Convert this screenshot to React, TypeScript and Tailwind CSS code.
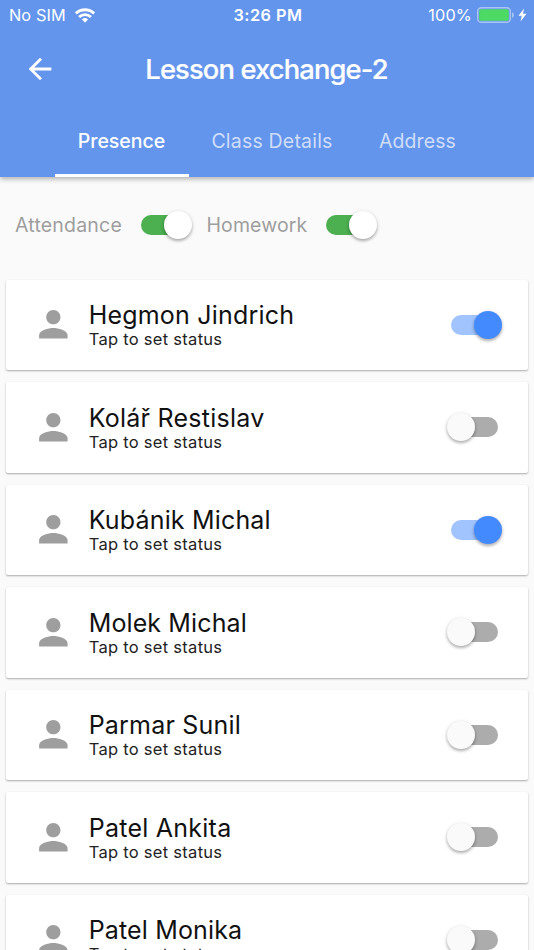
import React, { useState } from 'react';
import clsx from 'clsx';

const students = [
  { name: 'Hegmon Jindrich', present: true, spacing: 'tracking-[0.2px]' },
  { name: 'Kolář Restislav', present: false, spacing: 'tracking-[0.25px]' },
  { name: 'Kubánik Michal', present: true, spacing: 'tracking-[0.17px]' },
  { name: 'Molek Michal', present: false, spacing: 'tracking-[0.12px]' },
  { name: 'Parmar Sunil', present: false, spacing: 'tracking-[0.2px]' },
  { name: 'Patel Ankita', present: false, spacing: 'tracking-[0.25px]' },
  { name: 'Patel Monika', present: false, spacing: 'tracking-[0.15px]' },
];

const tabs = [
  { name: 'Presence', className: 'w-[134px] tracking-[0px]' },
  { name: 'Class Details', className: 'w-[167px] tracking-[0.2px]' },
  { name: 'Address', className: 'w-[124px] tracking-[0.1px]' },
];

type SwitchProps = {
  checked: boolean;
  green?: boolean;
  label: string;
  onChange: () => void;
};

const Switch = ({ checked, green, label, onChange }: SwitchProps) => (
  <button
    role="switch"
    aria-checked={checked}
    aria-label={label}
    onClick={onChange}
    className={clsx(
      'relative h-5 w-[47px] shrink-0 rounded-full',
      !checked && 'bg-[#acacac]',
      checked && (green ? 'bg-[#4caf50]' : 'bg-[#a1c4ff]')
    )}
  >
    <span
      className={clsx(
        'absolute -top-[4.2px] size-[28.4px] rounded-full shadow-[0_2px_3px_rgba(0,0,0,0.24),0_1px_4px_rgba(0,0,0,0.14)]',
        checked ? 'left-[23px]' : '-left-[4px]',
        !checked && 'bg-[#fafafa]',
        checked && (green ? 'bg-white' : 'bg-[#448aff]')
      )}
    />
  </button>
);

const StatusBar = () => (
  <div className="flex h-[30px] items-center justify-between pl-[9px] pr-[7px] text-[16.3px] leading-[30px]">
    <div className="flex flex-1 items-center gap-[9px]">
      <span className="tracking-[0.1px]">No SIM</span>
      <svg width="20" height="15" viewBox="0 0 20 15" fill="none" stroke="currentColor" strokeWidth="2.8">
        <path d="M0.9 5.4a13.2 13.2 0 0 1 18.2 0" />
        <path d="M4.1 8.9a8.6 8.6 0 0 1 11.8 0" />
        <path d="M10 14.7l-3-3.2a4.4 4.4 0 0 1 6 0z" fill="currentColor" stroke="none" />
      </svg>
    </div>
    <span className="font-semibold tracking-[0.45px]">3:26 PM</span>
    <div className="flex flex-1 items-center justify-end">
      <span className="mr-[5px] tracking-[0.15px]">100%</span>
      <svg width="38" height="16" viewBox="0 0 38 16">
        <rect x="0.7" y="0.7" width="32.6" height="14.6" rx="3.6" fill="none" stroke="#fff" strokeOpacity="0.45" strokeWidth="1.4" />
        <rect x="2.2" y="2.2" width="29.6" height="11.6" rx="1.8" fill="#4cd964" />
        <path d="M35 5.2c2.4 0.8 2.4 4.8 0 5.6z" fill="#fff" fillOpacity="0.45" />
      </svg>
      <svg className="ml-[3px]" width="9" height="14" viewBox="0 0 9 14" fill="currentColor">
        <path d="M6 0.5L0.5 7.8h3.2L2.5 13.5 8.5 5.8H5z" />
      </svg>
    </div>
  </div>
);

const Header = () => (
  <header className="relative z-10 h-[177px] bg-[#6495ed] text-white shadow-[0_2px_5px_rgba(0,0,0,0.3)]">
    <StatusBar />
    <div className="grid h-[77px] grid-cols-[80px_1fr_80px] items-center">
      <button aria-label="Back" className="ml-[23px] w-[34px]">
        <svg className="size-[34px]" viewBox="0 0 24 24" fill="currentColor">
          <path d="M20 11H7.83l5.59-5.59L12 4l-8 8 8 8 1.41-1.41L7.83 13H20v-2z" />
        </svg>
      </button>
      <h1 className="pt-[3px] pr-[1px] text-center text-[27.3px] font-medium tracking-[-0.85px] [-webkit-text-stroke:0.2px_white]">
        Lesson exchange-2
      </h1>
    </div>
    <nav className="flex h-[70px] justify-center">
      {tabs.map((tab, i) => (
        <button
          key={tab.name}
          className={clsx(
            'border-b-[3px] pt-[2px] text-[19.5px] whitespace-nowrap',
            tab.className,
            i === 0 ? 'border-white font-medium' : 'border-transparent text-white/70'
          )}
        >
          {tab.name}
        </button>
      ))}
    </nav>
  </header>
);

export default function App() {
  const [attendance, setAttendance] = useState(true);
  const [homework, setHomework] = useState(true);
  const [present, setPresent] = useState(students.map((s) => s.present));

  const toggle = (index: number) => {
    setPresent(present.map((value, i) => (i === index ? !value : value)));
  };

  return (
    <div className="h-[950px] w-[534px] overflow-hidden bg-[#fafafa] font-['Inter',sans-serif]">
      <Header />

      {/* Column switches */}
      <div className="flex h-[102.5px] items-center pb-[6.5px] pl-[15px] text-[19.5px] text-[#9e9e9e]">
        <span className="w-[126px] pt-[1px] tracking-[0.2px]">Attendance</span>
        <Switch green label="Attendance" checked={attendance} onChange={() => setAttendance(!attendance)} />
        <span className="ml-[18.5px] w-[119.5px] pt-[1px] tracking-[0.1px]">Homework</span>
        <Switch green label="Homework" checked={homework} onChange={() => setHomework(!homework)} />
      </div>

      <ul className="flex flex-col gap-[12px] px-[6px]">
        {students.map((student, i) => (
          <li
            key={student.name}
            className="flex h-[90.5px] shrink-0 items-center rounded-[2px] bg-white pl-[25.5px] pr-[30px] shadow-[0_1px_2px_rgba(0,0,0,0.32)]"
          >
            <svg className="size-[42.7px] shrink-0 text-[#9e9e9e]" viewBox="0 0 24 24" fill="currentColor">
              <path d="M12 12c2.21 0 4-1.79 4-4s-1.79-4-4-4-4 1.79-4 4 1.79 4 4 4zm0 2c-2.67 0-8 1.34-8 4v2h16v-2c0-2.66-5.33-4-8-4z" />
            </svg>
            <div className="ml-[14.5px] flex-1 pt-[1px] whitespace-nowrap">
              <p className={clsx('text-[25px] leading-[29px] text-[#111]', student.spacing)}>{student.name}</p>
              <p className="text-[16.5px] leading-[19.3px] tracking-[0.28px] text-[#222]">Tap to set status</p>
            </div>
            <Switch label={student.name} checked={present[i]} onChange={() => toggle(i)} />
          </li>
        ))}
      </ul>
    </div>
  );
}
